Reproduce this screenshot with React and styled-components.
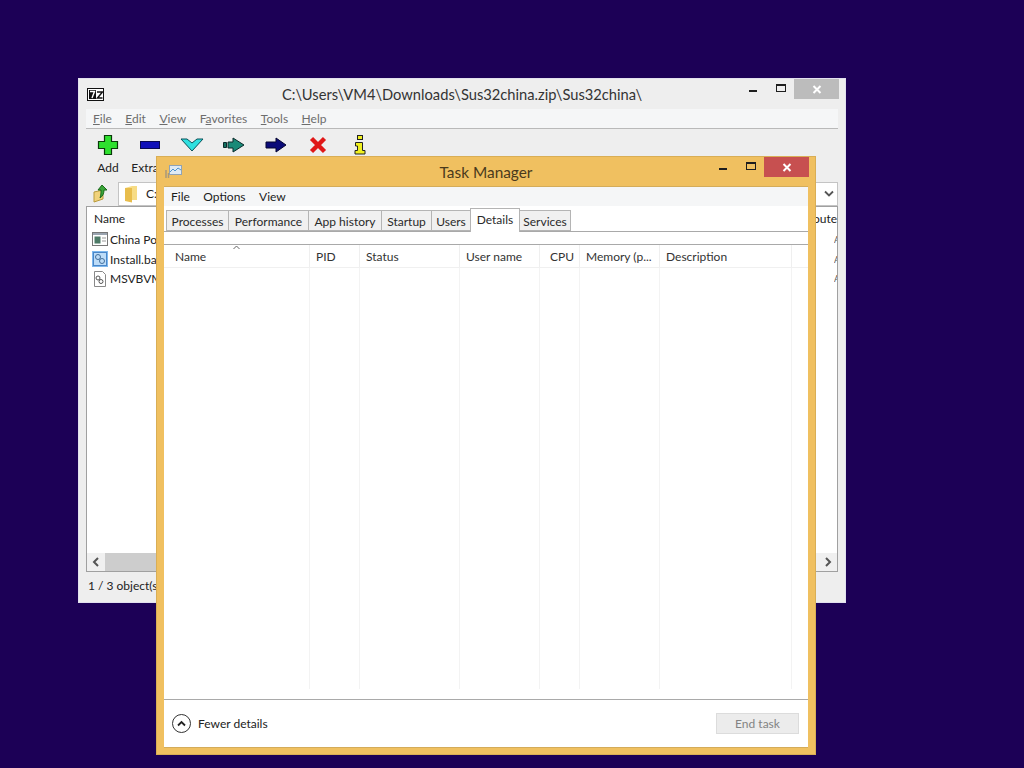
import React from "react";
import styled, { createGlobalStyle } from "styled-components";

const Global = createGlobalStyle`
  html, body { margin: 0; padding: 0; background: #1c0056; }
  * { box-sizing: border-box; }
  u { text-decoration-thickness: 1px; text-underline-offset: 1px; }
`;

const Desktop = styled.div`
  position: relative;
  width: 1024px;
  height: 768px;
  overflow: hidden;
  background: #1c0056;
  font-family: "Lato", "Open Sans", sans-serif;
  font-size: 12px;
  color: #222;
`;

const ZipWindow = styled.div`
  position: absolute;
  left: 78px;
  top: 78px;
  width: 768px;
  height: 525px;
  display: flex;
  flex-direction: column;
  background: #eeeeee;
  border: 1px solid #e2e0ee;
  padding: 0 7px 7px;
`;

const TitleBar = styled.div`
  display: grid;
  grid-template-columns: 1fr auto 1fr;
  align-items: center;
  flex: none;
  height: ${(p) => p.$h}px;
`;

const TitleText = styled.div`
  font-size: ${(p) => p.$size}px;
  color: ${(p) => p.$color};
  white-space: nowrap;
`;

const TitleIconSlot = styled.div`
  display: flex;
  align-items: center;
  padding-left: 1px;
  height: 100%;
`;

const Caption = styled.div`
  display: flex;
  justify-self: end;
  align-self: start;
  align-items: flex-start;
  margin-right: -1px;
`;

const CapGlyph = styled.div`
  width: 28px;
  height: 20px;
  display: flex;
  justify-content: center;
  align-items: center;
`;

const MinGlyph = styled.span`
  display: block;
  width: 8px;
  height: 2px;
  margin-top: 4px;
  background: #1e1e1e;
`;

const MaxGlyph = styled.span`
  display: block;
  width: 10px;
  height: 8px;
  margin-top: -2px;
  border: 1px solid #1e1e1e;
  border-top-width: 2px;
`;

const CloseBtn = styled.div`
  width: 45px;
  height: 20px;
  margin-left: -1px;
  display: flex;
  align-items: center;
  justify-content: center;
  background: ${(p) => p.$bg};
`;

const ZipMenu = styled.div`
  flex: none;
  height: 20px;
  display: flex;
  align-items: center;
  padding: 0 7px;
  gap: 13.5px;
  background: #f5f6f7;
  border-bottom: 1px solid #b9b9b9;
  color: #6d6d6d;
`;

const ZipToolbar = styled.div`
  flex: none;
  height: 52px;
  display: flex;
  padding: 4px 0 0 1px;
`;

const ToolButton = styled.div`
  width: 42px;
  display: flex;
  flex-direction: column;
  align-items: center;
  gap: 3px;
  color: #222;
`;

const ToolIcon = styled.div`
  height: 24px;
  display: flex;
  align-items: center;
  justify-content: center;
`;

const AddressBar = styled.div`
  flex: none;
  height: 25px;
  display: flex;
  align-items: center;
`;

const UpSlot = styled.div`
  width: 32px;
  display: flex;
  justify-content: center;
  padding-right: 3px;
`;

const AddressField = styled.div`
  flex: 1;
  height: 24px;
  display: flex;
  align-items: center;
  gap: 7px;
  padding: 0 2px 0 4px;
  background: #fff;
  border: 1px solid #c4c4c4;
`;

const AddressText = styled.span`
  flex: 1;
`;

const FileList = styled.div`
  flex: 1;
  min-height: 0;
  display: flex;
  flex-direction: column;
  background: #fff;
  border: 1px solid #a0a0a0;
`;

const FileHead = styled.div`
  height: 23px;
  flex: none;
  display: flex;
  justify-content: space-between;
  align-items: center;
  padding: 0 0 0 7px;
`;

const FileRows = styled.div`
  flex: 1;
`;

const FileRow = styled.div`
  height: 19.5px;
  display: flex;
  align-items: center;
  justify-content: space-between;
  padding-left: 5px;
`;

const FileName = styled.div`
  display: flex;
  align-items: center;
  gap: 2px;
`;

const Clip = styled.span`
  color: #555;
  font-size: 9px;
  width: 3px;
  overflow: hidden;
`;

const HScroll = styled.div`
  flex: none;
  height: 18px;
  display: flex;
  background: #f0f0f0;
`;

const ScrollArrow = styled.div`
  width: 18px;
  display: flex;
  align-items: center;
  justify-content: center;
  background: ${(p) => p.$bg};
`;

const ScrollThumb = styled.div`
  width: 400px;
  background: #cdcdcd;
`;

const ScrollTrack = styled.div`
  flex: 1;
`;

const StatusBar = styled.div`
  flex: none;
  height: 23px;
  display: flex;
  align-items: center;
  padding: 3px 0 0 2px;
`;

const TaskWindow = styled.div`
  position: absolute;
  left: 156px;
  top: 156px;
  width: 660px;
  height: 599px;
  display: flex;
  flex-direction: column;
  background: #f0c060;
  border: 1px solid #d9ae55;
  padding: 0 7px 6px;
`;

const TaskClient = styled.div`
  flex: 1;
  min-height: 0;
  display: flex;
  flex-direction: column;
  background: #fff;
  border-top: 1px solid #d4ac5a;
  border-bottom: 1px solid #d4ac5a;
`;

const TaskMenu = styled.div`
  flex: none;
  height: 19px;
  display: flex;
  align-items: center;
  padding-left: 7px;
  gap: 13.5px;
  background: #f5f6f7;
  color: #1c1c1c;
`;

const TabStrip = styled.div`
  flex: none;
  height: 26px;
  display: flex;
  align-items: flex-end;
  padding-left: 2px;
  border-bottom: 1px solid #a9a9a9;
`;

const Tab = styled.div`
  width: ${(p) => p.$w}px;
  height: ${(p) => (p.$active ? 24 : 21)}px;
  margin-bottom: ${(p) => (p.$active ? -1 : 0)}px;
  padding: ${(p) => (p.$active ? "0 0 3px" : "1px 0 0")};
  display: flex;
  align-items: center;
  justify-content: center;
  background: ${(p) => (p.$active ? "#fff" : "#f0f0f0")};
  border: 1px solid #b4b4b4;
  border-bottom: ${(p) => (p.$active ? "none" : "1px solid #b4b4b4")};
  margin-left: ${(p) => (p.$first ? 0 : -1)}px;
  position: relative;
  z-index: ${(p) => (p.$active ? 1 : 0)};
  white-space: nowrap;
  color: #2a2a2a;
`;

const TabPage = styled.div`
  flex: 1;
  min-height: 0;
  display: flex;
  flex-direction: column;
  padding-top: 12px;
`;

const cols = "146px 50px 100px 80px 40px 80px 132px";

const Table = styled.div`
  flex: 1;
  min-height: 0;
  display: flex;
  flex-direction: column;
  border-top: 1px solid #a9a9a9;
  padding-bottom: 10px;
`;

const HeadRow = styled.div`
  flex: none;
  height: 23px;
  display: grid;
  grid-template-columns: ${cols};
  background: #fff;
  border-bottom: 1px solid #f0f0f0;
`;

const HeadCell = styled.div`
  position: relative;
  display: flex;
  align-items: center;
  justify-content: ${(p) => (p.$right ? "flex-end" : "flex-start")};
  padding: ${(p) => (p.$right ? "0 5px 0 0" : `0 0 0 ${p.$pad ?? 6}px`)};
  border-right: 1px solid #efefef;
  color: #333;
  white-space: nowrap;
`;

const SortCaret = styled.svg`
  position: absolute;
  left: 69px;
  top: 0;
`;

const BodyRow = styled.div`
  flex: 1;
  display: grid;
  grid-template-columns: ${cols};
`;

const BodyCol = styled.div`
  border-right: 1px solid #f3f3f3;
`;

const TaskFooter = styled.div`
  flex: none;
  height: 48px;
  display: flex;
  align-items: center;
  justify-content: space-between;
  padding: 0 9px 0 8px;
  border-top: 1px solid #a9a9a9;
`;

const Fewer = styled.div`
  display: flex;
  align-items: center;
  gap: 7px;
  color: #222;
`;

const RoundButton = styled.div`
  width: 19px;
  height: 19px;
  border-radius: 50%;
  border: 1px solid #333;
  display: flex;
  align-items: center;
  justify-content: center;
`;

const EndTask = styled.div`
  width: 83px;
  height: 21px;
  display: flex;
  align-items: center;
  justify-content: center;
  background: #ececec;
  border: 1px solid #dcdcdc;
  color: #838383;
`;

const CloseX = ({ color }) => (
  <svg width="10" height="9" viewBox="0 0 10 9">
    <path d="M1.5 1 L8.5 8 M8.5 1 L1.5 8" stroke={color} strokeWidth="2" fill="none" />
  </svg>
);

const Logo7z = () => (
  <svg width="17" height="13" viewBox="0 0 17 13">
    <rect x="0.5" y="0.5" width="16" height="12" fill="#fff" stroke="#111" />
    <rect x="2" y="2" width="7" height="9" fill="#111" />
    <path d="M3 3.5h4.5L5 10" stroke="#fff" strokeWidth="1.4" fill="none" />
    <path d="M10 4h5.5L10.5 10h5" stroke="#111" strokeWidth="1.5" fill="none" />
  </svg>
);

const PlusIcon = () => (
  <svg width="22" height="22" viewBox="0 0 22 22">
    <path d="M7.5 1.5h7v6h6v7h-6v6h-7v-6h-6v-7h6z" fill="#2fe02f" stroke="#0a3a0a" strokeWidth="1.2" />
  </svg>
);
const MinusIcon = () => (
  <svg width="20" height="10" viewBox="0 0 20 10">
    <rect x="0.5" y="1.5" width="19" height="7" fill="#1010b8" stroke="#0a0a50" />
  </svg>
);
const CheckIcon = () => (
  <svg width="24" height="14" viewBox="0 0 24 14">
    <path d="M1 1h6l5 4 5-4h6L12 13z" fill="#2fe0e0" stroke="#0a5058" strokeWidth="1" />
  </svg>
);
const CopyIcon = () => (
  <svg width="22" height="16" viewBox="0 0 22 16">
    <path d="M0.5 5.5h3v5h-3z" fill="#127060" stroke="#0a2a2a" />
    <path d="M5 5h5V1l11 7-11 7v-4H5z" fill="#1a8a78" stroke="#0a2a2a" />
  </svg>
);
const MoveIcon = () => (
  <svg width="22" height="16" viewBox="0 0 22 16">
    <path d="M1 5h10V1l10 7-10 7v-4H1z" fill="#0a0a78" stroke="#050530" />
  </svg>
);
const DeleteIcon = () => (
  <svg width="18" height="18" viewBox="0 0 18 18">
    <path d="M2.5 2.5 L15.5 15.5 M15.5 2.5 L2.5 15.5" stroke="#e01818" strokeWidth="4.4" fill="none" />
  </svg>
);
const InfoIcon = () => (
  <svg width="12" height="20" viewBox="0 0 12 20">
    <rect x="3.5" y="0.5" width="5" height="4" fill="#f0f020" stroke="#222" />
    <path d="M1.5 7.5h7v8h2.5v3.5H1v-3.5h2.5v-4.5h-2z" fill="#f0f020" stroke="#222" />
  </svg>
);

const UpFolderIcon = () => (
  <svg width="16" height="19" viewBox="0 0 16 19">
    <path d="M1 8l9-2v9l-9 3z" fill="#f1d27a" stroke="#b89a3c" />
    <path d="M9 1l5 5h-3c0 3-1 6-4 8 1-3 1-5 1-8H5z" fill="#3aa63a" stroke="#1b6a1b" />
  </svg>
);
const FolderIcon = () => (
  <svg width="16" height="18" viewBox="0 0 16 18">
    <path d="M2 3l7-2h5v14H2z" fill="#f7dc85" />
    <path d="M2 3v13l7 1.5V3z" fill="#e8bd4c" />
  </svg>
);
const ExeIcon = () => (
  <svg width="16" height="15" viewBox="0 0 16 15">
    <rect x="0.5" y="0.5" width="15" height="13" fill="#fff" stroke="#777" />
    <rect x="1" y="1" width="14" height="2" fill="#9aa4b0" />
    <rect x="2.5" y="4.5" width="6" height="7" fill="#4d7a66" />
    <path d="M10 6h4M10 9h4" stroke="#999" />
  </svg>
);
const BatIcon = () => (
  <svg width="16" height="16" viewBox="0 0 16 16">
    <rect x="0" y="0" width="16" height="16" fill="#7db8ee" />
    <rect x="1.5" y="1.5" width="13" height="13" fill="#bcdcf8" stroke="#4a86c8" />
    <circle cx="6" cy="6" r="2.5" fill="none" stroke="#44709c" />
    <circle cx="10" cy="10" r="2.5" fill="none" stroke="#44709c" />
  </svg>
);
const DllIcon = () => (
  <svg width="16" height="16" viewBox="0 0 16 16">
    <path d="M2.5 0.5h8l3 3v12h-11z" fill="#fff" stroke="#888" />
    <circle cx="6" cy="7" r="2" fill="none" stroke="#555" />
    <circle cx="9" cy="10.5" r="2" fill="none" stroke="#555" />
  </svg>
);
const TaskIcon = () => (
  <svg width="17" height="15" viewBox="0 0 17 15">
    <rect x="4.5" y="1.5" width="12" height="9" fill="#dfeaf3" stroke="#8fa3b6" />
    <path d="M5 8l3-3 2 2 3-3 3 2" stroke="#4f95cf" fill="none" />
    <path d="M1 6v8M3.5 9v5" stroke="#a8987a" strokeWidth="1.5" />
  </svg>
);

const tools = [
  ["Add", <PlusIcon key="a" />],
  ["Extract", <MinusIcon key="b" />],
  ["Test", <CheckIcon key="c" />],
  ["Copy", <CopyIcon key="d" />],
  ["Move", <MoveIcon key="e" />],
  ["Delete", <DeleteIcon key="f" />],
  ["Info", <InfoIcon key="g" />],
];

const files = [
  ["China Population.exe", <ExeIcon key="a" />],
  ["Install.bat", <BatIcon key="b" />],
  ["MSVBVM60.DLL", <DllIcon key="c" />],
];

const tabs = [
  ["Processes", 63],
  ["Performance", 81],
  ["App history", 74],
  ["Startup", 51],
  ["Users", 40],
  ["Details", 50],
  ["Services", 52],
];

const headers = [
  { t: "Name", pad: 11 },
  { t: "PID" },
  { t: "Status" },
  { t: "User name" },
  { t: "CPU", right: true },
  { t: "Memory (p..." },
  { t: "Description" },
];

export default function App() {
  return (
    <Desktop>
      <Global />
      <ZipWindow>
        <TitleBar $h={30}>
          <TitleIconSlot><Logo7z /></TitleIconSlot>
          <TitleText $color="#333" $size={14.7}>C:\Users\VM4\Downloads\Sus32china.zip\Sus32china\</TitleText>
          <Caption>
            <CapGlyph><MinGlyph /></CapGlyph>
            <CapGlyph><MaxGlyph /></CapGlyph>
            <CloseBtn $bg="#bcbcbc"><CloseX color="#fff" /></CloseBtn>
          </Caption>
        </TitleBar>
        <ZipMenu>
          <span><u>F</u>ile</span>
          <span><u>E</u>dit</span>
          <span><u>V</u>iew</span>
          <span>F<u>a</u>vorites</span>
          <span><u>T</u>ools</span>
          <span><u>H</u>elp</span>
        </ZipMenu>
        <ZipToolbar>
          {tools.map(([label, icon]) => (
            <ToolButton key={label}>
              <ToolIcon>{icon}</ToolIcon>
              {label}
            </ToolButton>
          ))}
        </ZipToolbar>
        <AddressBar>
          <UpSlot><UpFolderIcon /></UpSlot>
          <AddressField>
            <FolderIcon />
            <AddressText>C:\Users\VM4\Downloads\Sus32china.zip\Sus32china\</AddressText>
            <svg width="12" height="8" viewBox="0 0 12 8">
              <path d="M2 1.5 L6 5.5 L10 1.5" stroke="#555" strokeWidth="1.8" fill="none" />
            </svg>
          </AddressField>
        </AddressBar>
        <FileList>
          <FileHead>
            <span>Name</span>
            <span>oute</span>
          </FileHead>
          <FileRows>
            {files.map(([name, icon]) => (
              <FileRow key={name}>
                <FileName>{icon}{name}</FileName>
                <Clip>A</Clip>
              </FileRow>
            ))}
          </FileRows>
          <HScroll>
            <ScrollArrow $bg="#f0f0f0">
              <svg width="8" height="10" viewBox="0 0 8 10">
                <path d="M6 1 L2 5 L6 9" stroke="#555" strokeWidth="2" fill="none" />
              </svg>
            </ScrollArrow>
            <ScrollThumb />
            <ScrollTrack />
            <ScrollArrow $bg="#f0f0f0">
              <svg width="8" height="10" viewBox="0 0 8 10">
                <path d="M2 1 L6 5 L2 9" stroke="#555" strokeWidth="2" fill="none" />
              </svg>
            </ScrollArrow>
          </HScroll>
        </FileList>
        <StatusBar>1 / 3 object(s) selected</StatusBar>
      </ZipWindow>

      <TaskWindow>
        <TitleBar $h={29}>
          <TitleIconSlot><TaskIcon /></TitleIconSlot>
          <TitleText $color="#4a3a1c" $size={15.4}>Task Manager</TitleText>
          <Caption>
            <CapGlyph><MinGlyph /></CapGlyph>
            <CapGlyph><MaxGlyph /></CapGlyph>
            <CloseBtn $bg="#c75050"><CloseX color="#fff" /></CloseBtn>
          </Caption>
        </TitleBar>
        <TaskClient>
          <TaskMenu>
            <span>File</span>
            <span>Options</span>
            <span>View</span>
          </TaskMenu>
          <TabStrip>
            {tabs.map(([label, w], i) => (
              <Tab key={label} $w={w} $first={i === 0} $active={label === "Details"}>{label}</Tab>
            ))}
          </TabStrip>
          <TabPage>
            <Table>
              <HeadRow>
                {headers.map((h) => (
                  <HeadCell key={h.t} $right={h.right} $pad={h.pad}>
                    {h.t}
                    {h.t === "Name" && (
                      <SortCaret width="7" height="5" viewBox="0 0 7 5">
                        <path d="M0.5 4 L3.5 1 L6.5 4" stroke="#666" fill="none" />
                      </SortCaret>
                    )}
                  </HeadCell>
                ))}
              </HeadRow>
              <BodyRow>
                {headers.map((h) => <BodyCol key={h.t} />)}
              </BodyRow>
            </Table>
            <TaskFooter>
              <Fewer>
                <RoundButton>
                  <svg width="9" height="7" viewBox="0 0 9 7">
                    <path d="M1 5.5 L4.5 2 L8 5.5" stroke="#222" strokeWidth="1.8" fill="none" />
                  </svg>
                </RoundButton>
                Fewer details
              </Fewer>
              <EndTask>End task</EndTask>
            </TaskFooter>
          </TabPage>
        </TaskClient>
      </TaskWindow>
    </Desktop>
  );
}
